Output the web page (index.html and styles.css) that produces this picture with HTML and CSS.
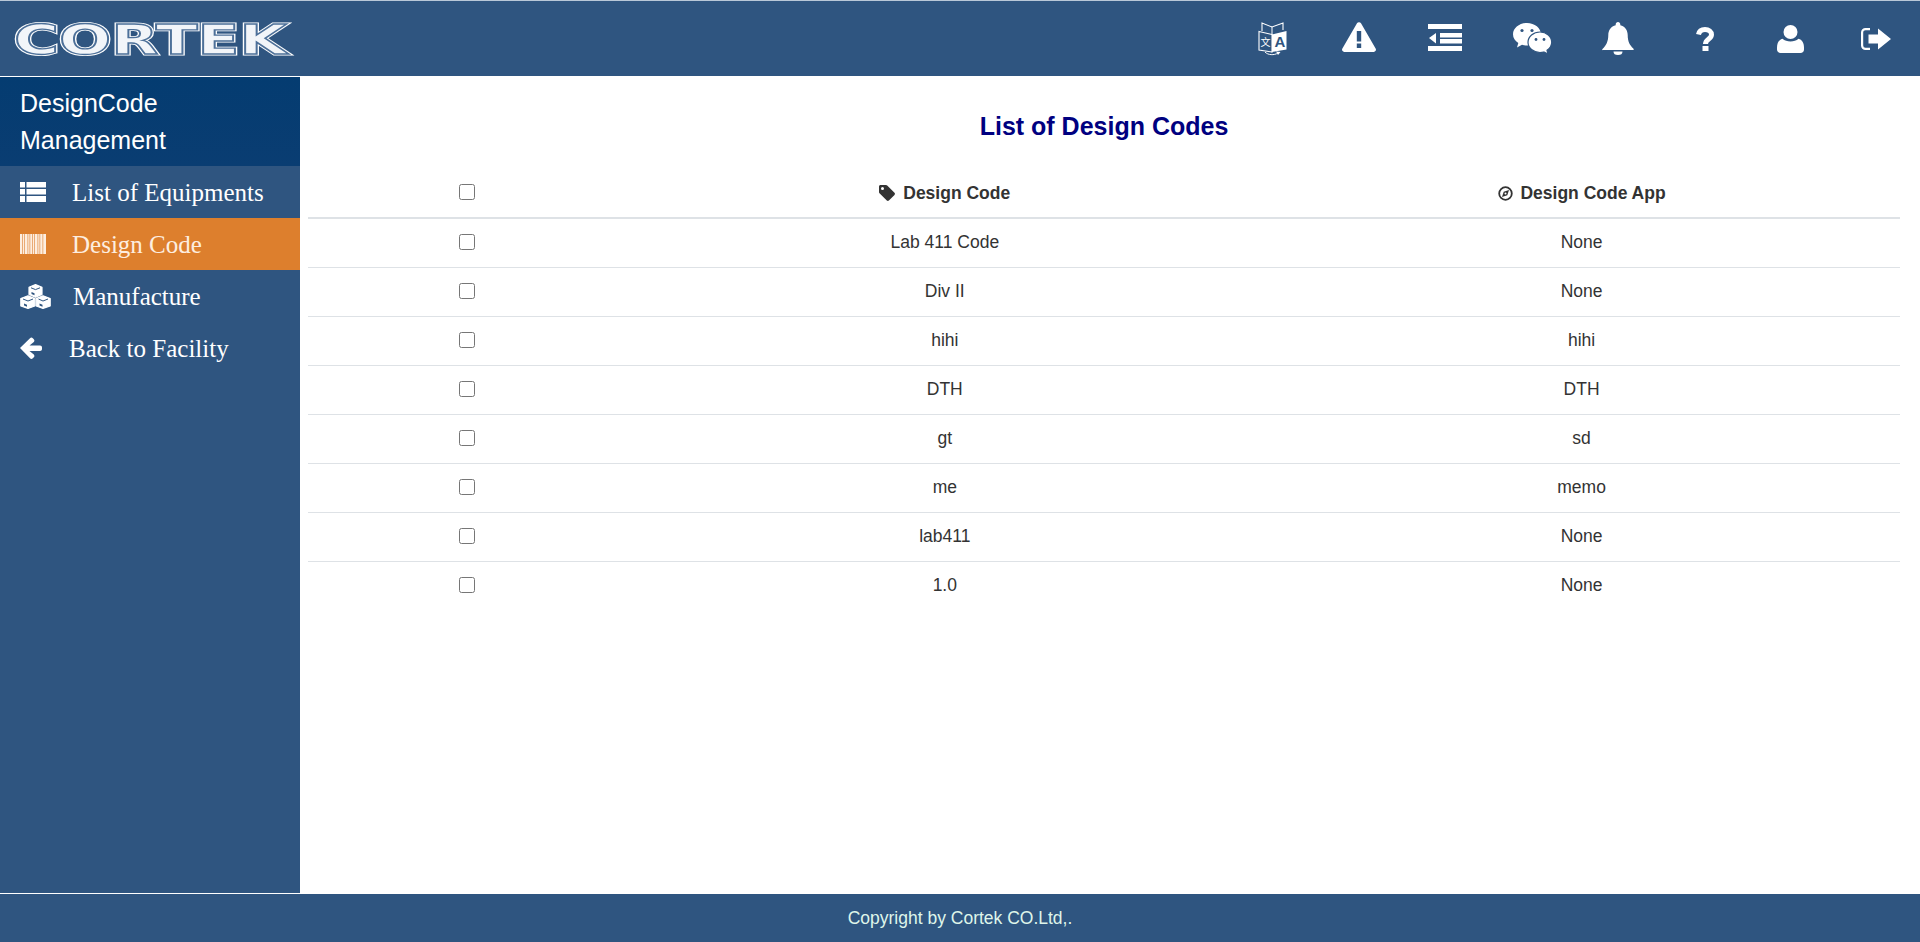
FILE: index.html
```html
<!DOCTYPE html>
<html lang="en">
<head>
    <meta charset="UTF-8">
    <meta name="viewport" content="width=device-width, initial-scale=1.0">
    <title>List of Design Codes</title>
    <link rel="stylesheet" href="styles.css">
</head>
<body>
    <header class="topbar">
        <svg class="logo" width="279" height="34" viewBox="0 0 279 34">
            <defs>
                <filter id="soft"><feGaussianBlur stdDeviation="0.35"/></filter>
            </defs>
            <g class="logo-text" filter="url(#soft)">
                <text class="logo-outer" x="0" y="32" textLength="273" lengthAdjust="spacingAndGlyphs">CORTEK</text>
                <text class="logo-gap" x="0" y="32" textLength="273" lengthAdjust="spacingAndGlyphs">CORTEK</text>
            </g>
        </svg>
        <nav class="tools">
            <a class="tool tool-lang" href="#">
                <svg width="29" height="34" viewBox="0 0 29 34">
                    <path d="M1 9.500 14 12.500V30L1 28Z" fill="none" stroke="#fff" stroke-width="1.100"/>
                    <path d="M14 12.500 28.500 9V27.500L14 30Z" fill="#fff"/>
                    <path d="M4 9V1l10 4 11-4v7" fill="none" stroke="#fff" stroke-width="1.100"/>
                    <path d="M14 5V13" stroke="#fff" stroke-width="1"/>
                    <text class="tr-a" x="16.500" y="25">A</text>
                    <text class="tr-b" x="2.500" y="24">文</text>
                    <path d="M7 30c3 3.200 9 3.500 13 1" fill="none" stroke="#fff" stroke-width="1"/>
                    <path d="M18 29.500 22.500 30 20 33Z" fill="#fff"/>
                </svg>
            </a>
            <a class="tool tool-up" href="#">
                <svg width="34" height="30" viewBox="0 0 34 30">
                    <path fill="#fff" fill-rule="evenodd" d="M15 1.300a2.300 2.300 0 0 1 4 0L33.600 26.500a2.300 2.300 0 0 1-2 3.500H2.400a2.300 2.300 0 0 1-2-3.500ZM14.800 9h4.400v10.500h-4.400ZM14.800 21.500h4.400V26h-4.400Z"/>
                </svg>
            </a>
            <a class="tool tool-up" href="#">
                <svg width="34" height="27" viewBox="0 0 34 27">
                    <path fill="#fff" d="M0 0H34V5H0ZM12 9H34V13.500H12ZM12 15H34V19.500H12ZM0 22H34V27H0ZM1 14 8 9V19.500Z"/>
                </svg>
            </a>
            <a class="tool" href="#">
                <svg width="39" height="31" viewBox="0 0 39 31">
                    <path fill="#fff" d="M14 0C6.300 0 0 5 0 11.300c0 3.700 2.100 6.800 5.300 8.800L4 24.500l5-2.700c1.600.5 3.300.7 5 .7 7.700 0 14-5 14-11.200S21.700 0 14 0Z"/>
                    <path fill="#fff" stroke="#2f5580" stroke-width="1.200" d="M27 9c-6.600 0-12 4.500-12 10.300S20.400 29.500 27 29.500c1.300 0 2.600-.2 3.800-.5l4.200 2-1-3.800c3-1.900 4.700-4.700 4.700-7.900C38.700 13.500 33.600 9 27 9Z"/>
                    <circle cx="9" cy="7.500" r="1.600" fill="#2f5580"/>
                    <circle cx="19" cy="7.500" r="1.600" fill="#2f5580"/>
                    <circle cx="23" cy="16.500" r="1.400" fill="#2f5580"/>
                    <circle cx="31" cy="16.500" r="1.400" fill="#2f5580"/>
                </svg>
            </a>
            <a class="tool" href="#">
                <svg width="32" height="33" viewBox="0 0 32 33">
                    <path fill="#fff" d="M16 0c1.300 0 2.300 1 2.300 2.300v.9c4.600 1 7.400 5 7.400 9.800 0 6.500 2 10 5.600 13.500.6.600.7 1.500-.4 1.500H1.100C0 28.500-.1 27.600.5 27 4.100 23.500 6.300 19.500 6.300 13c0-4.800 2.800-8.800 7.400-9.800v-.9C13.700 1 14.700 0 16 0ZM11.500 29.500h9a4.500 3.500 0 0 1-9 0Z"/>
                </svg>
            </a>
            <a class="tool tool-help" href="#">
                <svg width="18" height="24" viewBox="0 0 18 24">
                    <path fill="none" stroke="#fff" stroke-width="5" d="M2.500 7.500C3.200 4 6 2.500 9 2.500c3.700 0 6.500 2.300 6.500 5.300 0 4.200-6 4.200-6 9.200"/>
                    <path fill="#fff" d="M6.500 19H12.500V24H6.500Z"/>
                </svg>
            </a>
            <a class="tool" href="#">
                <svg width="27" height="28" viewBox="0 0 27 28">
                    <ellipse cx="13.500" cy="7" rx="7" ry="7" fill="#fff"/>
                    <path fill="#fff" d="M0 22.500c0-4.500 2-7.800 5.500-8.700 2 1.800 4.900 2.700 8 2.700s6-.9 8-2.700c3.500.9 5.500 4.200 5.500 8.700v2c0 2-1.500 3.500-3.500 3.500h-20C1.500 28 0 26.500 0 24.500Z"/>
                </svg>
            </a>
            <a class="tool" href="#">
                <svg width="30" height="22" viewBox="0 0 30 22">
                    <path fill="none" stroke="#fff" stroke-width="2.200" d="M9 1.100H4.500A3.400 3.400 0 0 0 1.100 4.500v13a3.400 3.400 0 0 0 3.400 3.400H9"/>
                    <path fill="#fff" d="M7.500 6.500H17V.5L30 11 17 21.500V15.500H7.500Z"/>
                </svg>
            </a>
        </nav>
    </header>

    <div class="page">
        <aside class="sidebar">
            <div class="sidebar-title">DesignCode Management</div>
            <a class="menu-item" href="#">
                <svg class="menu-icon" width="26" height="20" viewBox="0 0 26 20">
                    <path fill="#fff" d="M0 0H5V5.500H0ZM6.500 0H26V5.500H6.500ZM0 7H5V12.500H0ZM6.500 7H26V12.500H6.500ZM0 14H5V20H0ZM6.500 14H26V20H6.500Z"/>
                </svg>
                <span class="menu-label">List of Equipments</span>
            </a>
            <a class="menu-item active" href="#">
                <svg class="menu-icon" width="26" height="20" viewBox="0 0 26 20">
                    <path fill="#fdeee0" d="M0 0H2.400V20H0ZM3 0H4.400V20H3ZM5 0H7.600V20H5ZM8.200 0H9.600V20H8.200ZM10.200 0H12.400V20H10.200ZM13 0H14.400V20H13ZM15 0H17.600V20H15ZM18.200 0H19.600V20H18.200ZM20.200 0H22.600V20H20.200ZM23.200 0H26V20H23.200Z"/>
                </svg>
                <span class="menu-label">Design Code</span>
            </a>
            <a class="menu-item" href="#">
                <svg class="menu-icon" width="31" height="25" viewBox="0 0 31 25">
                    <path fill="#fff" stroke="#fff" stroke-width="1.200" stroke-linejoin="round" d="M15.500.6 22 3.300V10.500L15.500 13.300 9 10.500V3.300ZM8 11.800 14.800 14.600V22L8 24.400 .8 22V14.600ZM23 11.800 30.200 14.600V22L23 24.400 16.200 22V14.600Z"/>
                    <path fill="none" stroke="#2f5580" stroke-width="1" d="M11 3.800 15.500 5.600 20 3.800M3 15 8 17 13 15M18.500 15 23 17 28 15"/>
                    <path fill="#2f5580" d="M4 19.500l3 1.200v2l-3-1.200ZM19.500 19.500l3 1.200v2l-3-1.200ZM11.500 8l3 1.200v2l-3-1.200Z"/>
                </svg>
                <span class="menu-label manufacture">Manufacture</span>
            </a>
            <a class="menu-item" href="#">
                <svg class="menu-icon" width="22" height="22" viewBox="0 0 22 22">
                    <path fill="#fff" d="M0 11 10 1.200c.8-.8 2-.8 2.800 0l1 1c.8.800.8 2 0 2.800L9.500 8.500H20c1.200 0 2 .8 2 2v1.500c0 1.200-.8 2-2 2H9.500l4.300 3.500c.8.800.8 2 0 2.800l-1 1c-.8.800-2 .8-2.800 0Z"/>
                </svg>
                <span class="menu-label back">Back to Facility</span>
            </a>
        </aside>

        <main class="content">
            <h1 class="page-title">List of Design Codes</h1>
            <table class="codes">
                <thead>
                    <tr>
                        <th class="col-check"><input type="checkbox"></th>
                        <th class="col-code">
                            <svg class="th-icon" width="16" height="16" viewBox="0 0 16 16">
                                <path fill="#333" fill-rule="evenodd" d="M0 1.500C0 .7.700 0 1.500 0H7c.5 0 .9.200 1.200.5l7.300 7.300c.6.600.6 1.500 0 2.100l-5.600 5.600c-.6.600-1.500.6-2.100 0L.5 8.200C.200 7.900 0 7.500 0 7ZM3.500 5a1.500 1.500 0 1 0 0-3 1.500 1.500 0 0 0 0 3Z"/>
                            </svg>
                            Design Code
                        </th>
                        <th class="col-app">
                            <svg class="th-icon" width="15" height="15" viewBox="0 0 15 15">
                                <circle cx="7.500" cy="7.500" r="6.300" fill="none" stroke="#333" stroke-width="1.800"/>
                                <path fill="#333" d="M11 4 9.300 9.300 4 11 5.700 5.700ZM7.500 6.500a1 1 0 1 0 0 2 1 1 0 0 0 0-2Z" fill-rule="evenodd"/>
                            </svg>
                            Design Code App
                        </th>
                    </tr>
                </thead>
                <tbody>
                    <tr><td><input type="checkbox"></td><td>Lab 411 Code</td><td>None</td></tr>
                    <tr><td><input type="checkbox"></td><td>Div II</td><td>None</td></tr>
                    <tr><td><input type="checkbox"></td><td>hihi</td><td>hihi</td></tr>
                    <tr><td><input type="checkbox"></td><td>DTH</td><td>DTH</td></tr>
                    <tr><td><input type="checkbox"></td><td>gt</td><td>sd</td></tr>
                    <tr><td><input type="checkbox"></td><td>me</td><td>memo</td></tr>
                    <tr><td><input type="checkbox"></td><td>lab411</td><td>None</td></tr>
                    <tr><td><input type="checkbox"></td><td>1.0</td><td>None</td></tr>
                </tbody>
            </table>
        </main>
    </div>

    <footer class="footer">Copyright by Cortek CO.Ltd,.</footer>
</body>
</html>
```

FILE: styles.css
```css
* {
    box-sizing: border-box;
}
html, body {
    height: 100%;
}
body {
    margin: 0;
    display: flex;
    flex-direction: column;
    font-family: "Liberation Sans", Arial, sans-serif;
    font-size: 17.5px;
    line-height: 24px;
    color: #333;
    background: #fff;
    overflow: hidden;
}
a {
    color: inherit;
    text-decoration: none;
}

/* top bar */
.topbar {
    flex: none;
    height: 77px;
    display: flex;
    align-items: center;
    justify-content: space-between;
    padding-left: 14px;
    background: #2f5580;
    border-top: 1px solid #b9c8d8;
    border-bottom: 1px solid #fff;
}
.logo {
    display: block;
    overflow: visible;
}
.logo-text text {
    font-family: "DejaVu Sans", sans-serif;
    font-weight: bold;
    font-size: 40px;
}
.logo-outer {
    fill: #fff;
    stroke: #fff;
    stroke-width: 3;
}
.logo-gap {
    fill: #f2f5f9;
    stroke: #4d7099;
    stroke-width: 1.300;
}
.tools {
    display: flex;
    padding-right: 1px;
}
.tool {
    width: 86px;
    height: 75px;
    display: flex;
    align-items: center;
    justify-content: center;
}
.tool-lang svg {
    margin-right: 4px;
}
.tool-up svg {
    margin: 0 2px 3px 0;
}
.tool-help svg {
    margin-left: 2px;
}
.tr-a {
    font-family: "Liberation Sans", sans-serif;
    font-weight: bold;
    font-size: 15px;
    fill: #2f5580;
}
.tr-b {
    font-family: "Noto Sans CJK SC", sans-serif;
    font-size: 10px;
    fill: #fff;
}

/* sidebar + content */
.page {
    flex: 1;
    min-height: 0;
    display: flex;
}
.sidebar {
    flex: none;
    width: 300px;
    background: #2f5580;
    border-bottom: 1px solid #fff;
}
.sidebar-title {
    height: 89px;
    padding: 8px 20px 0;
    font-size: 25px;
    line-height: 37px;
    color: #fff;
    background: linear-gradient(#043c71, #0a3d72);
}
.menu-item {
    height: 52px;
    display: flex;
    align-items: center;
    padding-left: 20px;
    font-family: "Liberation Serif", "Times New Roman", serif;
    font-size: 25px;
    color: #fff;
}
.menu-item.active {
    background: #dd7f2d;
    color: #fdeee0;
}
.menu-icon {
    flex: none;
}
.menu-label {
    margin-left: 26px;
    padding-top: 2px;
}
.manufacture {
    margin-left: 22px;
}
.back {
    margin-left: 27px;
}
.content {
    flex: 1;
    min-width: 0;
    padding: 0 20px 0 8px;
}
.page-title {
    margin: 0;
    padding: 32px 0 26px;
    font-size: 25px;
    line-height: 34px;
    font-weight: bold;
    text-align: center;
    color: #000080;
}

/* table */
.codes {
    width: 100%;
    border-collapse: collapse;
    table-layout: fixed;
    text-align: center;
}
.codes th, .codes td {
    padding: 12px;
    vertical-align: top;
    border-top: 1px solid #dee2e6;
}
.codes td {
    padding: 11px 12px 13px;
}
.codes th {
    border-top: none;
    border-bottom: 2px solid #dee2e6;
    font-weight: bold;
}
.col-check {
    width: 20%;
}
.codes input {
    display: block;
    width: 16px;
    height: 16px;
    margin: 3px auto 0;
}
.codes td input {
    margin-top: 4px;
}
.th-icon {
    vertical-align: -2px;
    margin-right: 3px;
}
.footer {
    flex: none;
    height: 48px;
    line-height: 49px;
    text-align: center;
    background: #2f5580;
    color: #dff5ea;
}
```
